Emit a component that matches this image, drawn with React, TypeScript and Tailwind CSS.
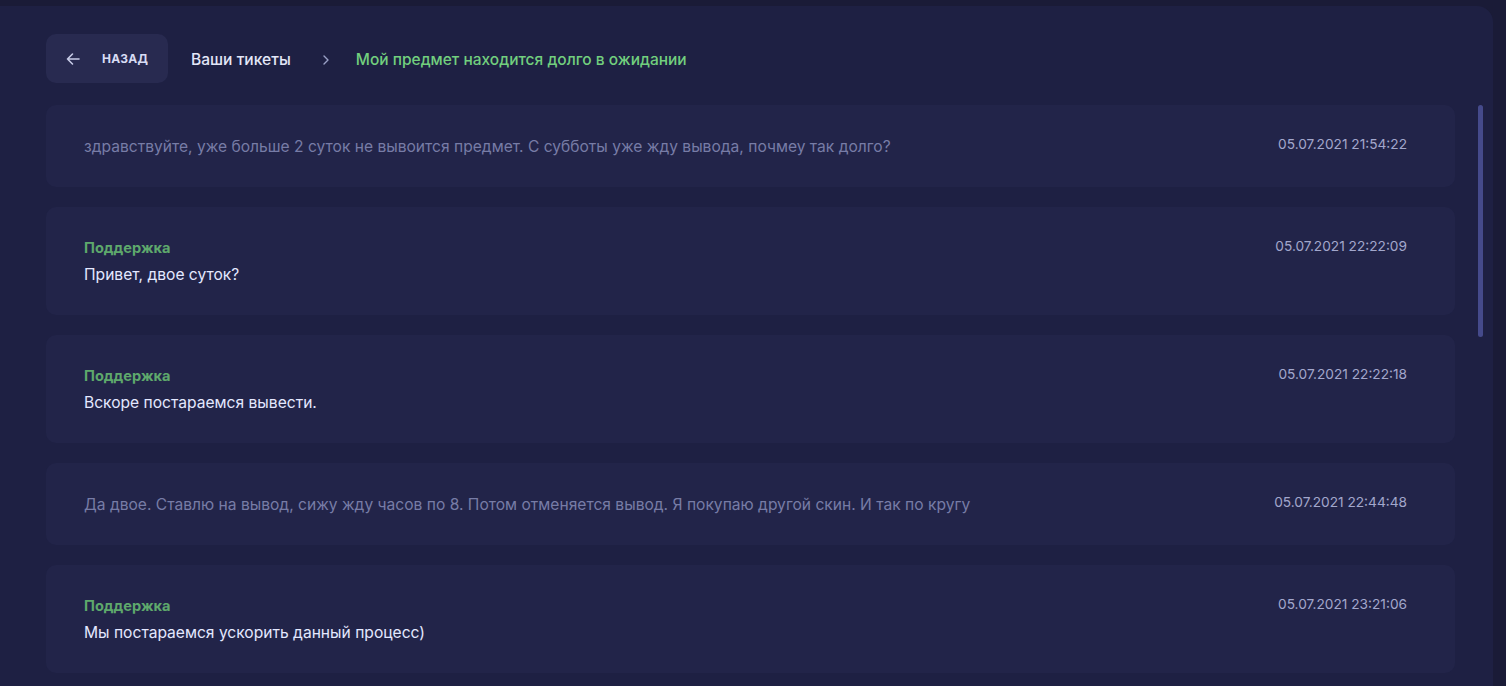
import React from "react";

type Msg = { author?: string; text: string; time: string };

const msgs: Msg[] = [
  { text: "здравствуйте, уже больше 2 суток не вывоится предмет. С субботы уже жду вывода, почмеу так долго?", time: "05.07.2021 21:54:22" },
  { author: "Поддержка", text: "Привет, двое суток?", time: "05.07.2021 22:22:09" },
  { author: "Поддержка", text: "Вскоре постараемся вывести.", time: "05.07.2021 22:22:18" },
  { text: "Да двое. Ставлю на вывод, сижу жду часов по 8. Потом отменяется вывод. Я покупаю другой скин. И так по кругу", time: "05.07.2021 22:44:48" },
  { author: "Поддержка", text: "Мы постараемся ускорить данный процесс)", time: "05.07.2021 23:21:06" },
];

export default function App() {
  return (
    <div
      className="h-[686px] w-[1506px] overflow-hidden bg-[#1a1b37] pt-[6px] pr-[13px]"
      style={{ fontFamily: "Inter, 'Noto Sans', sans-serif" }}
    >
      <div className="relative h-full rounded-tr-[16px] bg-[#1e2043] pl-[46px] pr-[38px] pt-[28px]">
        <div className="flex items-center">
          <button className="flex h-[49px] w-[122px] items-center rounded-[10px] bg-[#282a50] pl-[19px]">
            <svg width="16" height="16" viewBox="0 0 16 16" fill="none" stroke="#c7cbe6" strokeWidth="1.6" strokeLinecap="round" strokeLinejoin="round">
              <path d="M14 8H2.5M7.5 3L2.5 8l5 5" />
            </svg>
            <span className="ml-[21px] text-[12px] font-bold tracking-[0.2px] text-[#d8dcf4]">НАЗАД</span>
          </button>
          <span className="ml-[23px] mt-[2px] text-[15.6px] font-medium text-[#e3e6f7]">Ваши тикеты</span>
          <svg className="ml-[30px] mt-[2px]" width="10" height="12" viewBox="0 0 10 12" fill="none" stroke="#9aa0c6" strokeWidth="1.4" strokeLinecap="round" strokeLinejoin="round">
            <path d="M3 2l4 4-4 4" />
          </svg>
          <span className="ml-[25px] mt-[2px] text-[15.5px] font-medium text-[#72cf7e]">Мой предмет находится долго в ожидании</span>
        </div>

        <div className="mt-[22px] flex flex-col gap-[20px]">
          {msgs.map((m, i) => (
            <div key={i} className="flex items-start justify-between rounded-[10px] bg-[#222449] pl-[38px] pr-[48px] pt-[31px] pb-[29px]">
              <div className="flex flex-col gap-[6px]">
                {m.author && (
                  <div className="text-[14.6px] font-bold leading-[20px] text-[#5ea86c]">{m.author}</div>
                )}
                <div className={`text-[15.6px] leading-[22px] ${m.author ? "text-[#e4e8ff]" : "text-[#777ca6]"}`}>{m.text}</div>
              </div>
              <div className="text-[13.7px] leading-[16px] text-[#a2a7cc]">{m.time}</div>
            </div>
          ))}
        </div>

        <div className="absolute right-[10px] top-[99px] h-[232px] w-[5px] rounded-full bg-[#454a8b]" />
      </div>
    </div>
  );
}
